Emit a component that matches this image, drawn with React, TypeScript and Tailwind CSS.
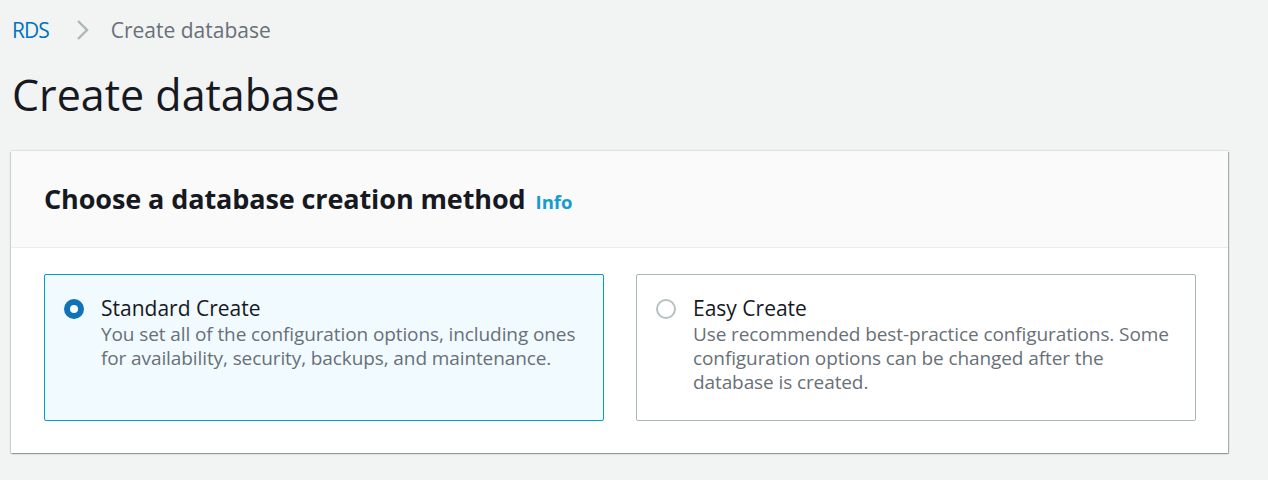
import React from 'react'

type OptionProps = {
  title: string
  description: string
  selected?: boolean
}

const Option = ({ title, description, selected = false }: OptionProps) => {
  return (
    <div
      className={`flex h-[147px] gap-[17px] rounded-[2px] border pl-[19px] pr-[20px] pt-[20px] ${
        selected ? 'border-[#00a1c9] bg-[#f1faff]' : 'border-[#aab7b8] bg-white'
      }`}
    >
      <div className="pt-[4px]">
        {selected ? (
          <div className="h-[20px] w-[20px] rounded-full border-[6px] border-[#0f73b8] bg-white" />
        ) : (
          <div className="h-[20px] w-[20px] rounded-full border-[2px] border-[#b5c1c2] bg-white" />
        )}
      </div>
      <div className="flex flex-col">
        <div className="text-[21px] leading-[26px] text-[#16191f]">{title}</div>
        <div className="mt-[1px] text-[19px] leading-[24px] tracking-[-0.1px] text-[#687078]">{description}</div>
      </div>
    </div>
  )
}

const App = () => {
  return (
    <div
      className="min-h-[480px] bg-[#f2f3f3] pl-[11px] pr-[40px] pt-[13px]"
      style={{ fontFamily: '"Open Sans", "Noto Sans", Arial, sans-serif' }}
    >
      {/* breadcrumbs */}
      <div className="flex items-center pl-[1px] text-[21px] leading-[34px]">
        <span className="tracking-[-1px] text-[#0073bb]">RDS</span>
        <svg className="ml-[27px] mr-[21px]" width="14" height="22" viewBox="0 0 14 22">
          <path d="M2 2 L11 11 L2 20" fill="none" stroke="#aab7b8" strokeWidth="2.4" />
        </svg>
        <span className="text-[#687078]">Create database</span>
      </div>

      <h1 className="mt-[22px] pl-[1px] text-[43px] leading-[52px] font-normal text-[#16191f]">Create database</h1>

      {/* panel */}
      <div className="mt-[30px] w-[1217px] bg-white shadow-[1px_1px_1px_0_rgba(0,28,36,0.3),-1px_1px_1px_0_rgba(0,28,36,0.15),0_-1px_1px_0_rgba(0,28,36,0.08)]">
        <div className="flex h-[97px] items-center border-b border-[#eaeded] bg-[#fafafa] pl-[33px]">
          <h2 className="text-[27px] font-bold tracking-[-0.1px] text-[#16191f]">Choose a database creation method</h2>
          <span className="ml-[10px] mt-[5px] text-[18.5px] font-bold text-[#129ccf]">Info</span>
        </div>
        <div className="grid grid-cols-2 gap-[32px] pb-[32px] pl-[33px] pr-[32px] pt-[26px]">
          <Option
            selected
            title="Standard Create"
            description="You set all of the configuration options, including ones for availability, security, backups, and maintenance."
          />
          <Option
            title="Easy Create"
            description="Use recommended best-practice configurations. Some configuration options can be changed after the database is created."
          />
        </div>
      </div>
    </div>
  )
}

export default App
